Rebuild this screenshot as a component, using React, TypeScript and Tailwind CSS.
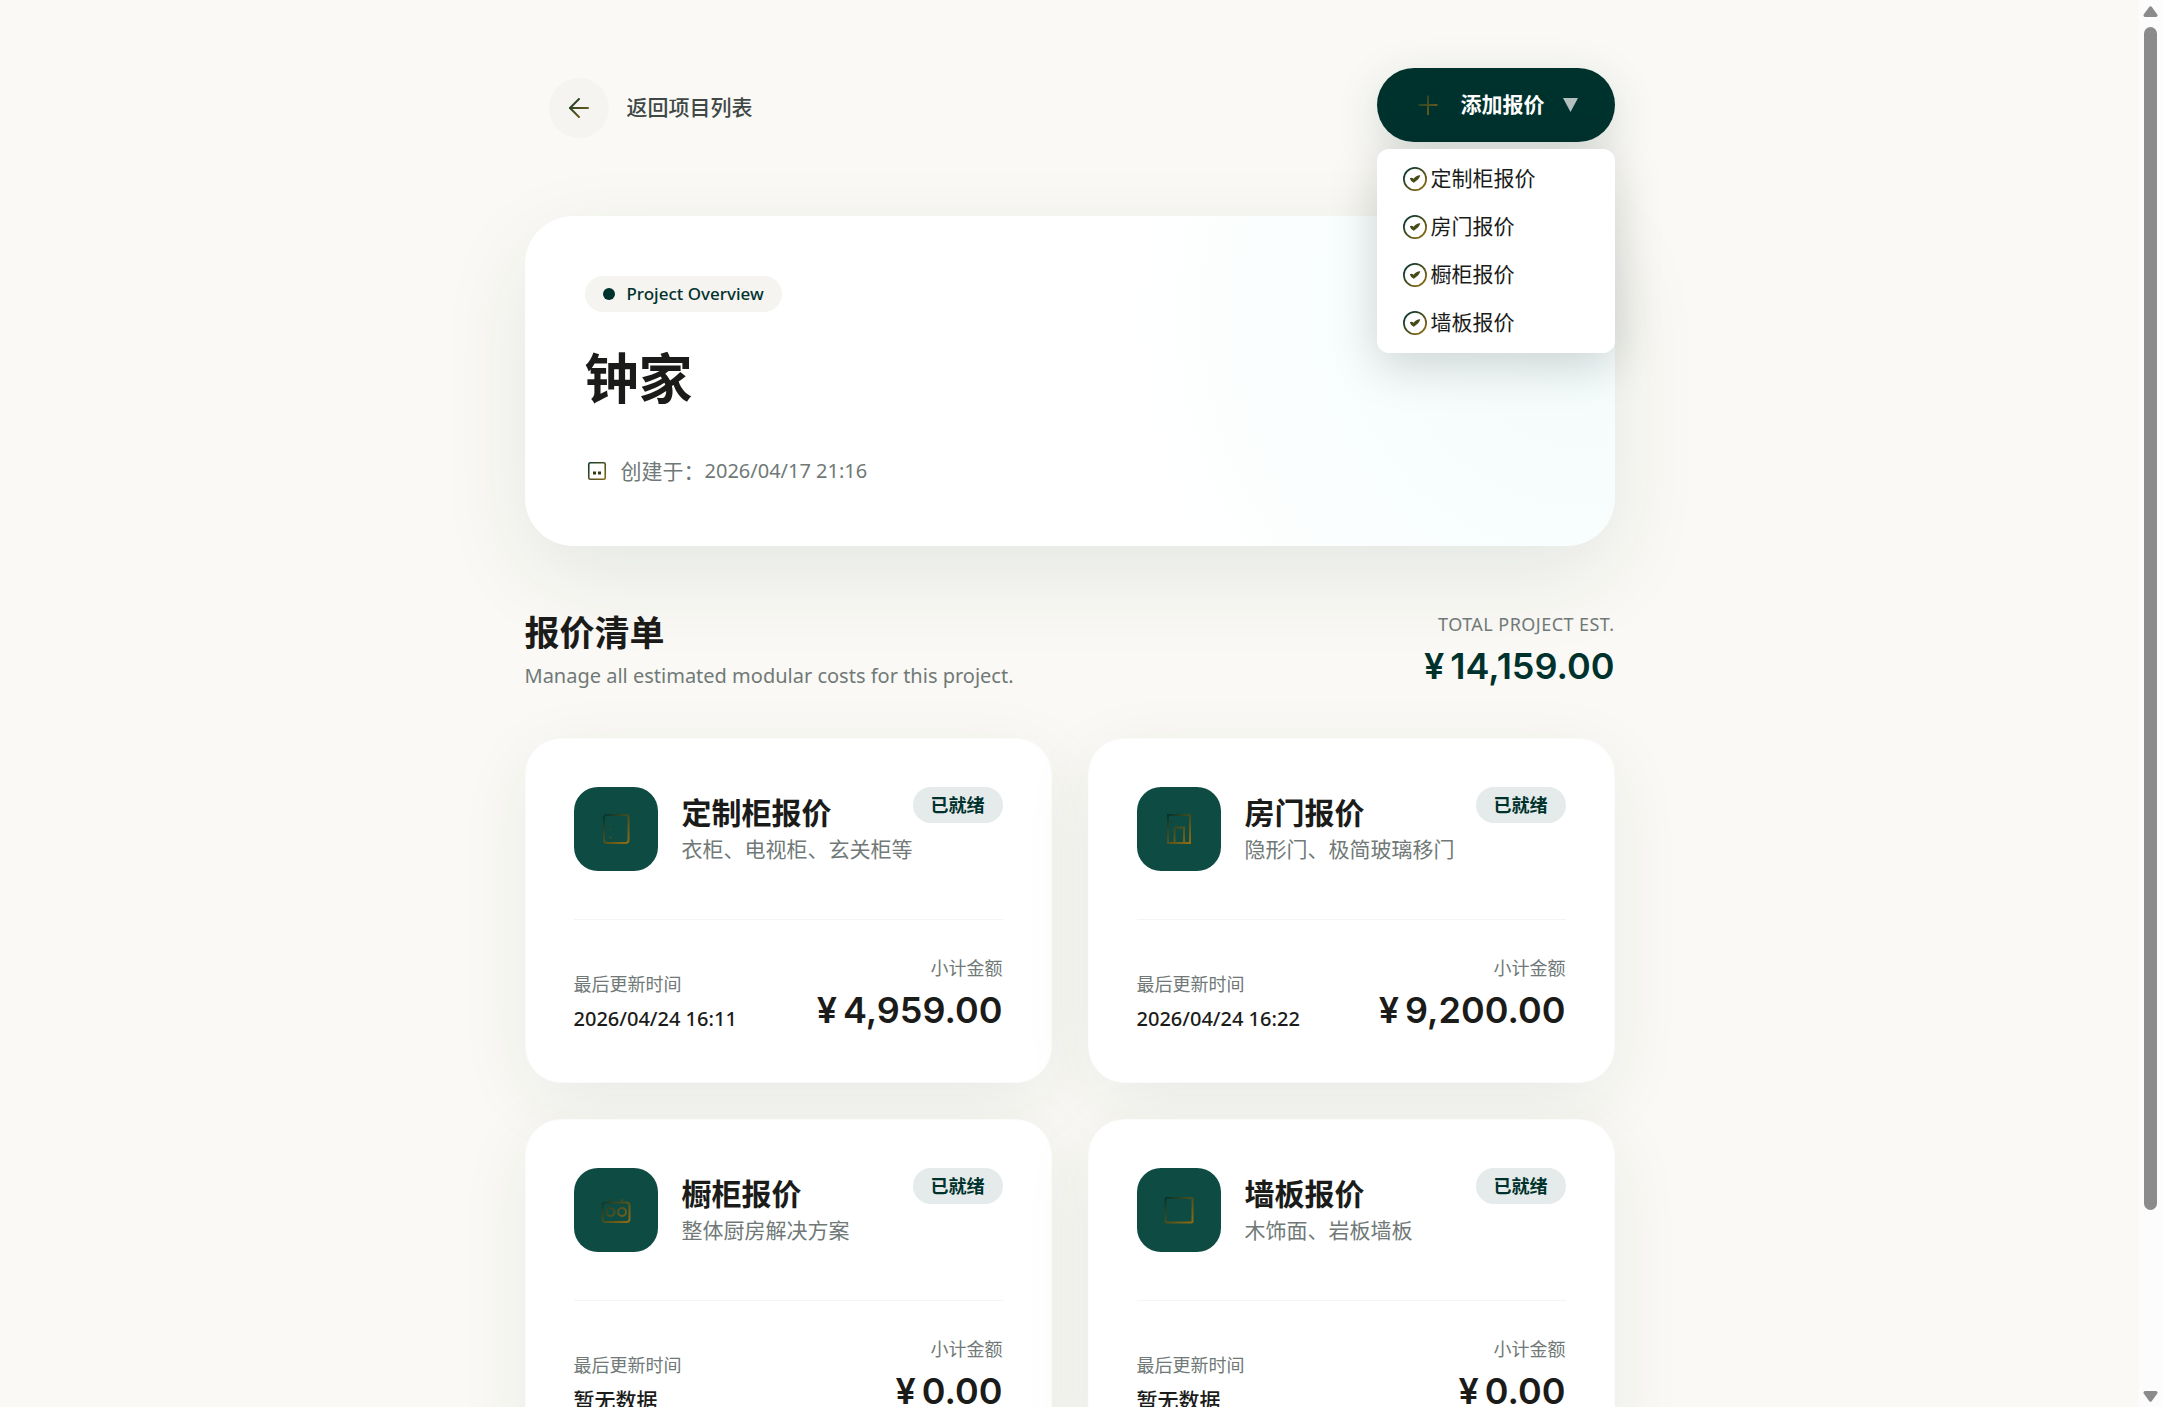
import React, { useId } from 'react';

const FONT = "font-['Noto_Sans','Noto_Sans_CJK_SC',sans-serif]";
const NUM = "font-['Inter','Noto_Sans_CJK_SC',sans-serif]";

type IconName = 'back' | 'plus' | 'check' | 'calendar' | 'cabinet' | 'door' | 'kitchen' | 'panel';

const shapes: Record<IconName, React.ReactNode> = {
  back: (
    <g strokeWidth="2" strokeLinecap="round" strokeLinejoin="round">
      <path d="M24 15H6" />
      <path d="M15 6L6 15L15 24" />
    </g>
  ),
  plus: <path d="M15 5.5V25M5.5 15H24.5" strokeWidth="2" />,
  check: (
    <g>
      <circle cx="15" cy="15" r="13.9" strokeWidth="2.2" />
      <path
        d="M8.7 14.2C9.8 13 11.4 13.3 13.3 14.6C15.6 11.8 18.5 10.1 21.6 10.4C20.6 14.6 17.5 17.2 13.6 19.6C11.4 18.8 9 16.8 8.7 14.2Z"
        stroke="none"
        fill="currentColor"
      />
    </g>
  ),
  calendar: (
    <g>
      <rect x="4.7" y="4.7" width="20.6" height="20.6" rx="2" strokeWidth="2" />
      <path d="M10 17.5h3.8M16.2 17.5h3.8" strokeWidth="3.6" stroke="#2f3a0e" />
    </g>
  ),
  cabinet: (
    <g strokeWidth="2">
      <rect x="3" y="1" width="24.5" height="28" rx="3" />
      <path d="M8.5 6.5h2M8.5 15h2M8.5 23.5h2" strokeWidth="1.6" />
    </g>
  ),
  door: (
    <g strokeWidth="2">
      <path d="M4 1H26V29H4Z" />
      <path d="M10.5 29V13.5H20V29" />
      <path d="M6.5 7.5h2.5" />
    </g>
  ),
  kitchen: (
    <g strokeWidth="2">
      <rect x="1.5" y="7.5" width="27" height="19.5" rx="3" />
      <circle cx="9.5" cy="17" r="4" />
      <circle cx="21" cy="17" r="4" />
      <path d="M9.5 4V7.5M21 4V7.5" />
    </g>
  ),
  panel: <rect x="1.5" y="3" width="27" height="24.5" rx="1.5" strokeWidth="2" />,
};

function Icon({ name, className }: { name: IconName; className: string }) {
  const id = useId();
  return (
    <svg viewBox="0 0 30 30" className={className} fill="none" stroke={`url(#${id})`} aria-hidden="true">
      <defs>
        <linearGradient id={id} x1="2" y1="2" x2="28" y2="28" gradientUnits="userSpaceOnUse">
          <stop offset="0" stopColor="#01342f" />
          <stop offset="1" stopColor="#926b12" />
        </linearGradient>
      </defs>
      {shapes[name]}
    </svg>
  );
}

type Quote = { icon: IconName; title: string; desc: string; updated: string | null; amount: string };

const quotes: Quote[] = [
  { icon: 'cabinet', title: '定制柜报价', desc: '衣柜、电视柜、玄关柜等', updated: '2026/04/24 16:11', amount: '4,959.00' },
  { icon: 'door', title: '房门报价', desc: '隐形门、极简玻璃移门', updated: '2026/04/24 16:22', amount: '9,200.00' },
  { icon: 'kitchen', title: '橱柜报价', desc: '整体厨房解决方案', updated: null, amount: '0.00' },
  { icon: 'panel', title: '墙板报价', desc: '木饰面、岩板墙板', updated: null, amount: '0.00' },
];

function Amount({ value, className }: { value: string; className: string }) {
  return (
    <p className={`mt-1 flex items-baseline justify-end gap-1.5 text-[36px] leading-[48px] font-semibold ${NUM} ${className}`}>
      <span>¥</span>
      <span>{value}</span>
    </p>
  );
}

function QuoteCard({ quote }: { quote: Quote }) {
  return (
    <article className="rounded-[36px] border border-[#fafbfa] bg-white p-12 shadow-[0_18px_72px_rgba(0,50,45,0.07)]">
      <div className="flex items-start justify-between">
        <div className="flex items-center gap-6">
          <div className="flex size-[84px] items-center justify-center rounded-3xl bg-[#0e4b43]">
            <Icon name={quote.icon} className="size-[30px]" />
          </div>
          <div>
            <h3 className="text-[30px] leading-[40px] font-bold text-[#1b1c1a]">{quote.title}</h3>
            <p className="text-[21px] leading-8 text-[#707977]">{quote.desc}</p>
          </div>
        </div>
        <span className="-ml-6 rounded-full bg-[#e5ebea] px-[18px] text-[18px] leading-9 font-bold whitespace-nowrap text-[#00322d]">
          已就绪
        </span>
      </div>
      <div className="mt-12 flex items-end justify-between border-t border-[#f3f4f3] pt-[35px]">
        <div>
          <p className="text-[18px] leading-[27px] text-[#707977]">最后更新时间</p>
          {quote.updated ? (
            <p className="mt-1.5 text-[20px] leading-[30px] font-medium text-[#1b1c1a]">{quote.updated}</p>
          ) : (
            <p className="mt-1.5 text-[21px] leading-[30px] font-medium text-[#1b1c1a]">暂无数据</p>
          )}
        </div>
        <div className="text-right">
          <p className="text-[18px] leading-[27px] text-[#707977]">小计金额</p>
          <Amount value={quote.amount} className="text-[#1b1c1a]" />
        </div>
      </div>
    </article>
  );
}

function Scrollbar() {
  return (
    <div className="flex w-[23px] shrink-0 flex-col items-center justify-between bg-[#fcfcfc] pt-[6px] pb-[5px]" aria-hidden="true">
      <svg viewBox="0 0 15 11" className="h-[11px] w-[15px]" fill="#8b8b8b">
        <path d="M6.3 .8Q7.5 -.5 8.7 .8L14.3 8.5Q15 10.8 13 11H2Q0 10.8 .7 8.5Z" />
      </svg>
      <div className="mt-[10px] mb-1 flex w-[13px] grow flex-col">
        <div className="h-[87%] rounded-full bg-[#8b8b8b]" />
      </div>
      <svg viewBox="0 0 15 11" className="h-[11px] w-[15px] rotate-180" fill="#8b8b8b">
        <path d="M6.3 .8Q7.5 -.5 8.7 .8L14.3 8.5Q15 10.8 13 11H2Q0 10.8 .7 8.5Z" />
      </svg>
    </div>
  );
}

export default function App() {
  return (
    <div className={`flex h-screen overflow-hidden bg-[#faf9f5] ${FONT}`}>
      <main className="h-full grow overflow-hidden">
        <div className="mx-auto max-w-[1090px] pt-[68px]">
          <header className="relative z-10 flex items-start justify-between pb-[74px]">
            <a href="#projects" className="mt-[10px] ml-6 flex items-center gap-[18px] text-[21px] font-medium text-[#404846]">
              <span className="flex size-[60px] items-center justify-center rounded-full bg-[#f5f4f1]">
                <Icon name="back" className="size-[30px]" />
              </span>
              返回项目列表
            </a>
            <div className="relative">
              <button
                type="button"
                aria-expanded="true"
                className="flex h-[74px] items-center gap-[18px] rounded-full bg-[#00322d] pr-[37px] pl-9 text-[21px] font-bold text-white shadow-[0_12px_45px_rgba(0,50,45,0.15)]"
              >
                <Icon name="plus" className="size-[30px]" />
                添加报价
                <svg viewBox="0 0 15 14" className="h-[14px] w-[15px]" fill="#b2c1bf" aria-hidden="true">
                  <path d="M0 0H15L7.5 14Z" />
                </svg>
              </button>
              <ul className="absolute top-full right-0 mt-[7px] w-full rounded-xl bg-white py-[6px] shadow-[0_12px_48px_rgba(0,20,18,0.18)]">
                {quotes.map((q) => (
                  <li key={q.title}>
                    <button type="button" className="flex h-12 w-full items-center gap-1 pl-[26px] text-[21px] text-[#1b1c1a]">
                      <Icon name="check" className="size-6 text-[#454a17]" />
                      {q.title}
                    </button>
                  </li>
                ))}
              </ul>
            </div>
          </header>

          <section className="rounded-[48px] bg-white bg-[radial-gradient(circle_460px_at_97%_30%,#f4fcfc_0%,#f8fdfd_50%,#ffffff_100%)] p-[60px] shadow-[0_30px_90px_rgba(0,50,45,0.09)]">
            <p className="flex h-9 w-fit items-center gap-3 rounded-full bg-[#f5f4f1] px-[18px] text-[17px] font-medium text-[#00322d]">
              <span className="size-3 rounded-full bg-[#00322d]" />
              Project Overview
            </p>
            <h1 className="mt-[30px] text-[54px] leading-[72px] font-bold text-[#1b1c1a]">钟家</h1>
            <p className="mt-[42px] flex items-center gap-3 leading-[30px] text-[#707977]">
              <Icon name="calendar" className="size-6" />
              <span className="flex items-center">
                <span className="text-[21px]">创建于：</span>
                <span className="text-[20px]">2026/04/17 21:16</span>
              </span>
            </p>
          </section>

          <section>
            <div className="mt-[60px] flex items-end justify-between">
              <div>
                <h2 className="text-[35px] leading-[54px] font-bold text-[#1b1c1a]">报价清单</h2>
                <p className="text-[20px] leading-8 text-[#707977]">Manage all estimated modular costs for this project.</p>
              </div>
              <div className="mb-0.5 text-right">
                <p className="text-[18px] leading-[27px] tracking-wide text-[#707977]">TOTAL PROJECT EST.</p>
                <Amount value="14,159.00" className="text-[#00322d]" />
              </div>
            </div>
            <div className="mt-[46px] grid grid-cols-2 gap-9">
              {quotes.map((q) => (
                <QuoteCard key={q.title} quote={q} />
              ))}
            </div>
          </section>
        </div>
      </main>
      <Scrollbar />
    </div>
  );
}
